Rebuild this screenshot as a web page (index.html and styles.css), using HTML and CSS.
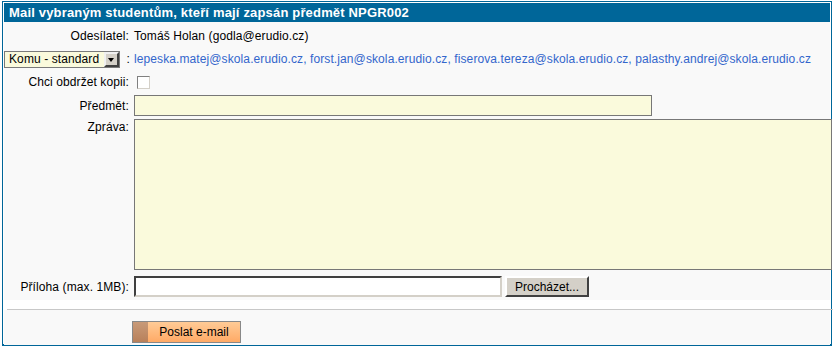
FILE: index.html
```html
<!DOCTYPE html>
<html lang="cs">
<head>
  <meta charset="UTF-8" />
  <title>Mail studentům</title>
  <link rel="stylesheet" href="styles.css">
</head>
<body>

  <!-- Mail form box -->
  <div class="box">
    <div class="title">Mail vybraným studentům, kteří mají zapsán předmět NPGR002</div>

    <div class="form">
      <div class="label">Odesílatel:</div>
      <div class="value">Tomáš Holan (godla@erudio.cz)</div>

      <div class="label">
        <span class="select"><span class="select-text">Komu - standard</span><span class="select-arrow"></span></span>
        <span class="colon">:</span>
      </div>
      <div class="value recipients">lepeska.matej@skola.erudio.cz, forst.jan@skola.erudio.cz, fiserova.tereza@skola.erudio.cz, palasthy.andrej@skola.erudio.cz</div>

      <div class="label">Chci obdržet kopii:</div>
      <div class="value"><span class="check"></span></div>

      <div class="label">Předmět:</div>
      <div class="value"><input type="text" class="field subject"></div>

      <div class="label top">Zpráva:</div>
      <div class="value tall"><textarea class="field message"></textarea></div>

      <div class="label">Příloha (max. 1MB):</div>
      <div class="value file-row">
        <input type="text" class="file">
        <button class="browse">Procházet...</button>
      </div>
    </div>

    <div class="divider"></div>

    <div class="actions">
      <button class="send"><span class="send-edge"></span><span class="send-text">Poslat e-mail</span></button>
    </div>
  </div>

</body>
</html>
```

FILE: styles.css
```css
body {
  margin: 0;
  font-family: 'Liberation Sans', Arial, sans-serif;
  font-size: 12px;
  letter-spacing: 0.1px;
  color: #000;
  background: #fff;
}

.box {
  margin: 1px 0 0 2px;
  width: 830px;
  height: 345px;
  border: 1px solid #006699;
  border-width: 1px 1px 2px 1px;
  padding: 1px;
  box-sizing: border-box;
  background: #fff;
  display: flex;
  flex-direction: column;
}

.title {
  background: #006699;
  color: #fff;
  font-weight: bold;
  font-size: 13px;
  letter-spacing: 0.17px;
  height: 19px;
  line-height: 19px;
  padding-left: 5px;
}

.form {
  background: #f9f9f9;
  display: grid;
  grid-template-columns: 125px 1fr;
  column-gap: 5px;
  padding: 4px 0 0 0;
  align-items: center;
}

.label {
  text-align: right;
  height: 20px;
  line-height: 20px;
  margin-bottom: 3px;
  white-space: nowrap;
}

.label.top {
  align-self: start;
  line-height: 16px;
}

.value {
  white-space: nowrap;
  margin-bottom: 3px;
  display: flex;
  align-items: center;
  min-height: 20px;
}

.value.tall {
  margin-bottom: 6px;
}

.recipients {
  color: #3366cc;
}

/* fake dropdown */
.select {
  display: inline-flex;
  align-items: center;
  width: 116px;
  height: 17px;
  border: 1px solid #7a7a7a;
  background: #fafadc;
  vertical-align: middle;
  text-align: left;
  box-sizing: border-box;
}

.select-text {
  flex: 1;
  padding-left: 4px;
  line-height: 15px;
}

.select-arrow {
  width: 15px;
  height: 15px;
  background: #d4d0c8;
  border: 2px solid;
  border-color: #f0f0f0 #404040 #404040 #f0f0f0;
  box-sizing: border-box;
  position: relative;
}

.select-arrow::after {
  content: '';
  position: absolute;
  left: 2px;
  top: 4px;
  border-left: 3.5px solid transparent;
  border-right: 3.5px solid transparent;
  border-top: 4px solid #000;
}

.colon {
  margin-left: 3px;
  margin-right: 1px;
}

.check {
  display: inline-block;
  width: 11px;
  height: 11px;
  margin-left: 3px;
  background: #fff;
  border: 1px solid;
  border-color: #808080 #d4d0c8 #d4d0c8 #808080;
}

.field {
  background: #fafadc;
  border: 1px solid #777;
  box-sizing: border-box;
  font-family: inherit;
  font-size: 12px;
  margin: 0;
}

.subject {
  width: 518px;
  height: 21px;
}

.message {
  width: 698px;
  height: 151px;
  resize: none;
  display: block;
}

.file-row {
  gap: 3px;
}

.file {
  width: 368px;
  height: 21px;
  box-sizing: border-box;
  margin: 0;
  background: #fff;
  border: 2px solid;
  border-color: #404040 #d4d0c8 #d4d0c8 #404040;
}

.browse {
  height: 21px;
  width: 84px;
  margin: 0;
  padding: 0;
  font-family: inherit;
  font-size: 12px;
  color: #000;
  background: #d4d0c8;
  border: 2px solid;
  border-color: #fff #404040 #404040 #fff;
}

.divider {
  background: #f9f9f9;
  border-top: 1px solid #c8c8c8;
  margin: 9px 0 0 3px;
  width: 826px;
  height: 0;
}

.actions {
  flex: 1;
  background: #f9f9f9;
  padding: 11px 0 0 128px;
}

.send {
  display: inline-flex;
  height: 22px;
  width: 109px;
  padding: 0;
  margin: 0;
  border: 1px solid #888;
  font-family: inherit;
  font-size: 12px;
  color: #000;
  background: linear-gradient(#ffcb96, #ffaa66);
  cursor: pointer;
}

.send-edge {
  width: 15px;
  height: 100%;
  background: linear-gradient(#c89a78, #b8805a);
}

.send-text {
  flex: 1;
  line-height: 20px;
  text-align: center;
}
```
